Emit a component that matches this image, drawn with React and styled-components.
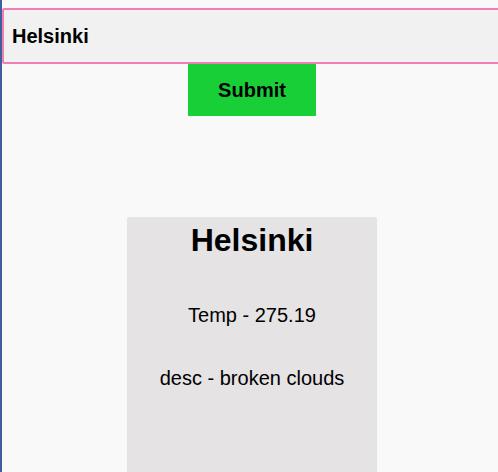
import React from "react";
import styled, { createGlobalStyle } from "styled-components";

const GlobalStyle = createGlobalStyle`
  html, body {
    margin: 0;
    padding: 0;
    background: #f9f9f9;
    overflow: hidden;
    font-family: "Liberation Sans", Arial, sans-serif;
  }
`;

const Page = styled.div`
  width: 502px;
  height: 472px;
  border-left: 2px solid #3e5f9c;
  display: flex;
  flex-direction: column;
  align-items: center;
  padding-top: 8px;
  box-sizing: border-box;
  overflow: hidden;
`;

const Form = styled.form`
  width: 100%;
  display: flex;
  flex-direction: column;
  align-items: center;
`;

const CityInput = styled.input`
  width: 100%;
  height: 56px;
  box-sizing: border-box;
  border: 2px solid #ee80b4;
  border-radius: 2px;
  background: #f1f1f1;
  padding: 0 8px;
  font-family: "Liberation Sans", Arial, sans-serif;
  font-size: 20px;
  font-weight: bold;
  color: #000;
  outline: none;
`;

const SubmitButton = styled.button`
  width: 128px;
  height: 52px;
  border: none;
  background: #19cf38;
  font-family: "Liberation Sans", Arial, sans-serif;
  font-size: 20px;
  font-weight: bold;
  color: #000;
  cursor: pointer;
`;

const Card = styled.div`
  margin-top: 101px;
  width: 250px;
  flex: 1;
  background: #e5e3e4;
  border-radius: 2px 2px 0 0;
  display: flex;
  flex-direction: column;
  align-items: center;
`;

const City = styled.h1`
  margin: 5px 0 0;
  font-size: 32px;
  font-weight: bold;
  line-height: 37px;
`;

const Info = styled.p`
  margin: ${(p) => p.$top}px 0 0;
  font-size: 20px;
  line-height: 23px;
`;

export default function App() {
  return (
    <>
      <GlobalStyle />
      <Page>
        <Form onSubmit={(e) => e.preventDefault()}>
          <CityInput defaultValue="Helsinki" />
          <SubmitButton type="submit">Submit</SubmitButton>
        </Form>
        <Card>
          <City>Helsinki</City>
          <Info $top={45}>Temp - 275.19</Info>
          <Info $top={40}>desc - broken clouds</Info>
        </Card>
      </Page>
    </>
  );
}
